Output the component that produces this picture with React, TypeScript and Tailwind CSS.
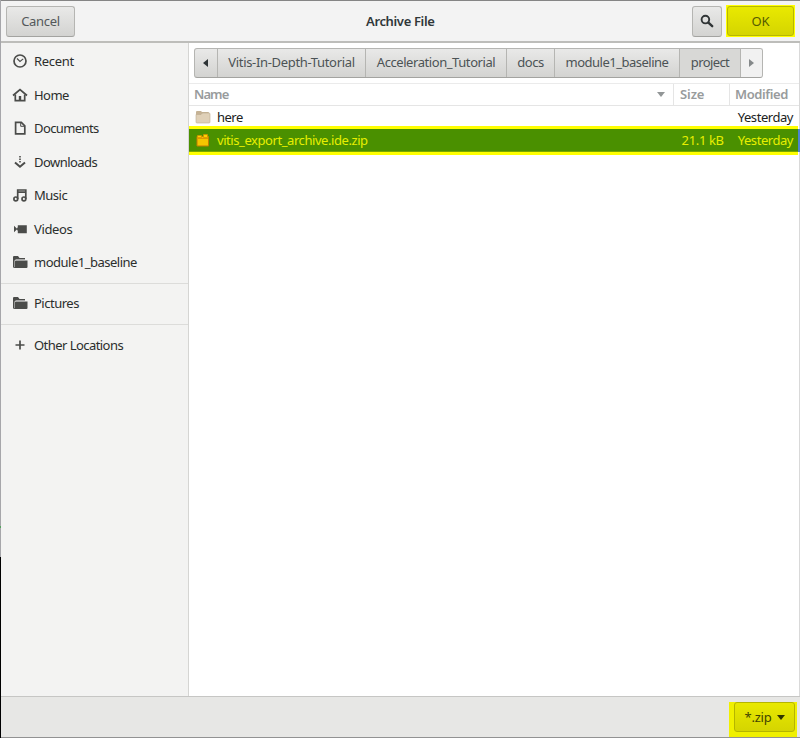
import type { ReactNode } from "react";

const btn =
  "flex items-center justify-center rounded-[3px] border border-[#b5b5b2] border-b-[#a3a3a0] bg-gradient-to-b from-[#e9e9e8] to-[#d3d3d1] text-[#53585a]";

function Icon({ children }: { children: ReactNode }) {
  return (
    <svg width="16" height="16" viewBox="0 0 16 16" fill="none" stroke="#4b4c4a" strokeWidth="1.7" className="shrink-0">
      {children}
    </svg>
  );
}

const folder = (
  <Icon>
    <path d="M1 13.5V3.2Q1 2 2 2h4l1.5 2H13v1.5H4.2L3.2 6v7.5z" fill="#4b4c4a" stroke="none" />
    <path d="M4 6.5h11.5V13q0 1-1 1H1.2Q3 13.5 3 12V7.3z" fill="#4b4c4a" stroke="none" />
    <path d="M2.5 13V6.6L4 5.9h9" stroke="#b9b9b7" strokeWidth=".7" />
  </Icon>
);

function Place({ icon, label, track }: { icon: ReactNode; label: string; track: string }) {
  return (
    <div className="flex h-[33.5px] items-center gap-[6px] pl-[11px] text-[#2b2e2d]">
      {icon}
      <span className={track}>{label}</span>
    </div>
  );
}

function Crumb({ label, width, track, active }: { label: string; width: string; track: string; active?: boolean }) {
  return (
    <div className={`flex h-full items-center justify-center border-r border-[#b5b5b2] pb-[2px] ${width} ${active ? "bg-[#d8d8d6]" : ""}`}>
      <span className={track}>{label}</span>
    </div>
  );
}

export default function App() {
  return (
    <div className="flex h-[738px] w-[800px] overflow-hidden">
      <div className="flex w-px shrink-0 flex-col bg-[#a6a6aa]">
        <div className="mt-[526px] h-[2px] bg-[#54a35c]" />
        <div className="mt-[29px] flex-1 bg-black" />
      </div>
      <div className="flex min-w-0 flex-1 flex-col border-t border-t-[#858585] bg-white font-['Noto_Sans','Open_Sans',sans-serif] text-[13px] leading-[18px] whitespace-nowrap">
        <header className="flex h-[42px] shrink-0 items-center border-b-2 border-[#bdbdba] bg-[#f3f3f3] pl-[5px] pr-[5px]">
          <div className={`${btn} h-[31px] w-[69px]`}><span className="tracking-[-0.3px]">Cancel</span></div>
          <div className="flex-1 pl-[291px] font-semibold text-[#303739]"><span className="tracking-[-0.35px]">Archive File</span></div>
          <div className={`${btn} mr-[4px] h-[31px] w-[30px]`}>
            <svg width="14" height="14" viewBox="0 0 14 14" fill="none" stroke="#303536"><circle cx="5.4" cy="5.6" r="3.8" strokeWidth="1.9" /><path d="M8.4 8.6l3.8 3.6" strokeWidth="2.4" strokeLinecap="round" /></svg>
          </div>
          <div className="flex h-[32px] w-[69px] items-center justify-center border border-[#ffff00] bg-[#f4f400]">
            <div className="flex h-[30px] w-[67px] items-center justify-center rounded-[3px] border border-[#b8b800] bg-gradient-to-b from-[#e9e900] to-[#d5d500] pb-px text-[#575d00]">OK</div>
          </div>
        </header>

        <div className="flex min-h-0 flex-1">
          <aside className="w-[188px] shrink-0 border-r border-[#d5d5d3] bg-[#f3f3f2] pt-[1.5px]">
            <Place label="Recent" track="tracking-[-0.3px]" icon={<Icon><circle cx="8" cy="8" r="6" /><path d="M5 5.5l3 3 3.2-2.7" strokeWidth="1.1" /></Icon>} />
            <Place label="Home" track="tracking-[-0.55px]" icon={<Icon><path d="M1 8.5L8 2.5l7 6" /><path d="M3.3 7.5v6.2h9.4V7.5" /><path d="M8 9v4.5" strokeWidth="2.4" /></Icon>} />
            <Place label="Documents" track="tracking-[-0.6px]" icon={<Icon><path d="M3.6 2.4h5.7l3.5 3.5v8H3.6z" /><path d="M8.7 2.5v3.8h4" strokeWidth="1" /></Icon>} />
            <Place label="Downloads" track="tracking-[-0.55px]" icon={<Icon><path d="M8 2v7" strokeWidth="1.6" strokeDasharray="1.5 1" /><path d="M3 8.5l5 4.3 5-4.3" strokeWidth="2" /></Icon>} />
            <Place label="Music" track="tracking-[-0.5px]" icon={<Icon><path d="M5.7 12V3h8.1v9M5.7 5.2h8.1" /><circle cx="3.8" cy="11.9" r="1.9" /><circle cx="11.9" cy="11.9" r="1.9" /></Icon>} />
            <Place label="Videos" track="tracking-[-0.35px]" icon={<Icon><path d="M2 4.8L5.3 8 2 11.2zM5.8 4.3h9v7.9h-9V10l-1-2 1-2z" fill="#4b4c4a" stroke="none" /></Icon>} />
            <Place label="module1_baseline" track="tracking-[-0.5px]" icon={folder} />
            <div className="mt-[3.5px] border-t border-[#dcdcda] pt-[3px]"><Place label="Pictures" track="tracking-[-0.5px]" icon={folder} /></div>
            <div className="mt-[4px] border-t border-[#dcdcda] pt-[3px]"><Place label="Other Locations" track="tracking-[-0.55px]" icon={<Icon><path d="M3.5 8h9M8 3.5v9" /></Icon>} /></div>
          </aside>

          <main className="min-w-0 flex-1 border-r border-[#d9d9d9]">
            <div className="h-[41px] border-b border-[#ebebeb] pl-[5px] pt-[5px]">
              <nav className="flex h-[30px] w-[569px] overflow-hidden rounded-[3px] border border-[#b5b5b2] border-b-[#a3a3a0] bg-gradient-to-b from-[#e9e9e8] to-[#d3d3d1] text-[#4c5355]">
                <div className="flex w-[23px] shrink-0 items-center justify-center border-r border-[#b5b5b2] pr-px"><svg width="5" height="8" viewBox="0 0 5 8" fill="#2e3436"><path d="M5 0v8L0 4z" /></svg></div>
                <Crumb label="Vitis-In-Depth-Tutorial" width="w-[148px]" track="tracking-[-0.33px]" />
                <Crumb label="Acceleration_Tutorial" width="w-[141px]" track="tracking-[-0.43px]" />
                <Crumb label="docs" width="w-[48px]" track="tracking-[-0.5px]" />
                <Crumb label="module1_baseline" width="w-[125px]" track="tracking-[-0.5px]" />
                <Crumb label="project" width="w-[61px]" track="tracking-[-0.6px]" active />
                <div className="flex flex-1 items-center justify-center bg-[#f1f1f1]"><svg width="5" height="8" viewBox="0 0 5 8" fill="#85898a"><path d="M0 0v8l5-4z" /></svg></div>
              </nav>
            </div>
            <div className="flex h-[22px] border-b border-[#e5e5e5] font-semibold text-[#989b9c]">
              <div className="flex w-[485px] items-center justify-between border-r border-[#e5e5e5] pl-[5px] pr-[8px]"><span className="pb-[2px] tracking-[-0.9px]">Name</span><svg width="8" height="5" viewBox="0 0 8 5" fill="#929697"><path d="M0 0h8L4 5z" /></svg></div>
              <div className="flex w-[56px] items-center border-r border-[#e5e5e5] pb-[2px] pl-[6px] tracking-[-0.1px]">Size</div>
              <div className="flex items-center pb-[2px] pl-[5px] tracking-[-0.4px]">Modified</div>
            </div>
            <div className="flex h-[20px] items-center pl-[6px] pt-[2px] text-[#202222]">
              <svg width="16" height="14" viewBox="0 0 16 14"><path d="M1 2q0-1 1-1h4l1 1h6q1 0 1 1v9H1z" fill="#c5b295" /><path d="M1 4.5h5L7.5 3H14q1 0 1 1v8q0 1-1 1H2q-1 0-1-1z" fill="#dfd0b8" stroke="#bdab90" strokeWidth=".6" /></svg>
              <span className="ml-[6px] flex-1 tracking-[-0.5px]">here</span>
              <span className="pr-[6px] tracking-[-0.45px]">Yesterday</span>
            </div>
            <div className="-mr-px flex h-[29px]">
              <div className="flex flex-1 bg-[#ffff00] py-[3px]">
                <div className="flex flex-1 items-center border-b border-[#79a600] bg-[#4a9000] pl-[6px] text-[#e7ef00]">
                  <svg width="16" height="16" viewBox="0 0 16 16"><path d="M2 4.5h11.5v9.5H2z" fill="#f4c600" stroke="#c17d00" /><path d="M2.5 3.5h4v2h-4zM8.5 2.5h4v3h-4z" fill="#ffd300" stroke="#d68b00" strokeWidth=".7" /><path d="M2.5 6.5h10.5" stroke="#de9700" /></svg>
                  <span className="ml-[6px] flex-1 tracking-[-0.43px]">vitis_export_archive.ide.zip</span>
                  <span className="w-[43px] text-right tracking-[-0.35px]">21.1 kB</span>
                  <span className="ml-[14px] pr-[5px] tracking-[-0.45px]">Yesterday</span>
                </div>
              </div>
              <div className="my-[3px] w-[2px] bg-[#4a83d0]" />
            </div>
          </main>
        </div>

        <footer className="flex h-[42px] shrink-0 justify-end border-b border-t border-b-[#929292] border-t-[#c6c6c4] bg-[#e7e7e5] pr-[3px]">
          <div className="mt-[5px] flex w-[68px] items-start bg-[#f0f000] pl-[5px]">
            <div className="flex h-[30px] w-[61px] items-center justify-center gap-[5px] rounded-[3px] border border-[#b5b500] bg-gradient-to-b from-[#e9e900] to-[#d5d500] text-[#3f4400]">
              <span className="tracking-[-0.2px]">*.zip</span>
              <svg width="8" height="5" viewBox="0 0 8 5" fill="#303500"><path d="M0 0h8L4 5z" /></svg>
            </div>
          </div>
        </footer>
      </div>
    </div>
  );
}
